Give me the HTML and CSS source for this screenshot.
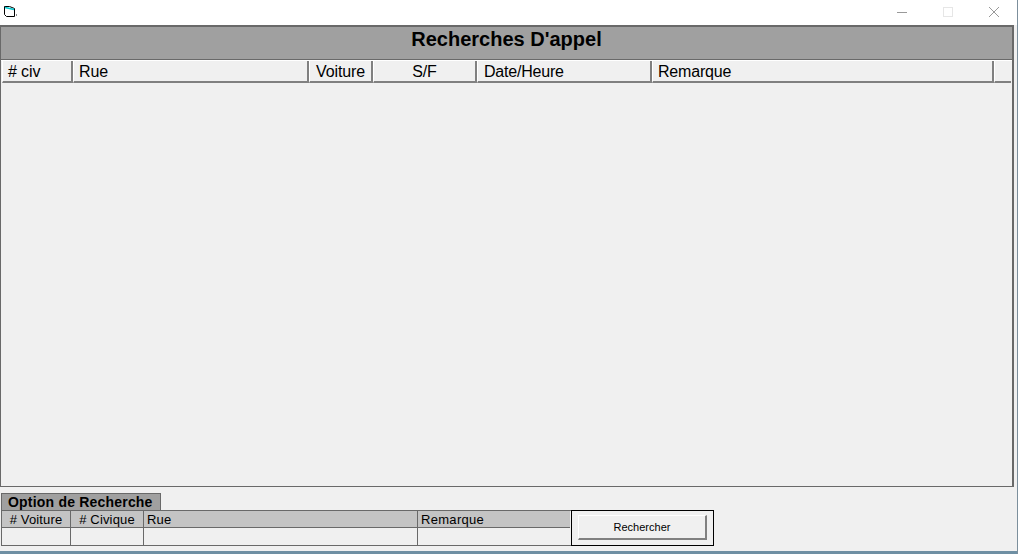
FILE: index.html
```html
<!DOCTYPE html>
<html lang="fr">
<head>
<meta charset="utf-8">
<title>Recherches D'appel</title>
<link rel="stylesheet" href="styles.css">
</head>
<body>
<div class="window">
  <div class="titlebar">
    <svg class="app-icon" width="14" height="14" viewBox="0 0 14 14">
      <path d="M1.5 2.5H6.5L11.5 4.5V12.5H3.5L1.5 10.5Z" fill="#fff" stroke="#000"/>
      <path d="M2 3.5L11 5.5" stroke="#00c8d0" stroke-width="1.5"/>
      <rect x="13" y="10" width="1" height="2" fill="#888"/>
    </svg>
    <div class="controls">
      <svg class="ctl ctl-min" width="14" height="14" viewBox="0 0 14 14"><path d="M2 7.5H12" stroke="#999"/></svg>
      <svg class="ctl ctl-max" width="14" height="14" viewBox="0 0 14 14"><rect x="2.5" y="2.5" width="9" height="9" fill="none" stroke="#e6e6e6"/></svg>
      <svg class="ctl ctl-close" width="14" height="14" viewBox="0 0 14 14"><path d="M2 2L12 12M12 2L2 12" stroke="#999"/></svg>
    </div>
  </div>
  <div class="content">
    <div class="results">
      <div class="results-title">Recherches D'appel</div>
      <div class="columns">
        <div class="col col-civ">#&nbsp;civ</div>
        <div class="col col-rue">Rue</div>
        <div class="col col-voiture">Voiture</div>
        <div class="col col-sf">S/F</div>
        <div class="col col-date">Date/Heure</div>
        <div class="col col-rem">Remarque</div>
        <div class="col col-end"></div>
      </div>
      <div class="list"></div>
    </div>
    <div class="options">
      <div class="options-tab">Option de Recherche</div>
      <div class="options-row">
        <div class="grid">
          <div class="cell head f-voiture">#&nbsp;Voiture</div>
          <div class="cell head f-civique">#&nbsp;Civique</div>
          <div class="cell head f-rue">Rue</div>
          <div class="cell head f-rem">Remarque</div>
          <div class="cell"></div>
          <div class="cell"></div>
          <div class="cell"></div>
          <div class="cell"></div>
        </div>
        <div class="action"><button class="search-btn" type="button">Rechercher</button></div>
      </div>
    </div>
  </div>
  <div class="desktop-edge"></div>
</div>
</body>
</html>
```

FILE: styles.css
```css
html, body { margin: 0; padding: 0; height: 100%; overflow: hidden; background: #f0f0f0; }
* { box-sizing: border-box; }

.window {
  width: 1018px;
  height: 554px;
  display: flex;
  flex-direction: column;
  border-right: 1px solid #7c8f9c;
  font-family: "Liberation Sans", Arial, sans-serif;
  color: #000;
}

.titlebar {
  height: 25px;
  flex: none;
  background: #fff;
  display: flex;
  align-items: center;
  justify-content: space-between;
  padding: 0 16px 0 3px;
}
.app-icon { display: block; margin-bottom: 3px; overflow: visible; }
.controls { display: flex; gap: 32px; margin-top: -1px; }
.ctl { display: block; }

.content {
  flex: 1;
  min-height: 0;
  display: flex;
  flex-direction: column;
  padding-right: 3px;
}

.results {
  height: 462px;
  flex: none;
  border: 1px solid #696969;
  border-top-width: 2px;
  border-right-width: 2px;
  display: flex;
  flex-direction: column;
}
.results-title {
  height: 33px;
  flex: none;
  background: #a0a0a0;
  border-bottom: 1px solid #696969;
  text-align: center;
  font-size: 20px;
  font-weight: 700;
  line-height: 25px;
}
.columns {
  height: 23px;
  flex: none;
  display: flex;
  background: #f0f0f0;
  border-top: 1px solid #fff;
  padding-left: 1px;
}
.col {
  background: #f0f0f0;
  border-left: 1px solid #fff;
  border-right: 2px solid #808080;
  border-bottom: 2px solid #808080;
  font-size: 16px;
  line-height: 22px;
  padding-left: 5px;
  white-space: nowrap;
  letter-spacing: -0.12px;
}
.col-civ { width: 71px; }
.col-rue { width: 236px; }
.col-voiture { width: 64px; padding-left: 6px; }
.col-sf { width: 104px; text-align: center; padding-left: 0; }
.col-date { width: 175px; padding-left: 6px; letter-spacing: -0.2px; }
.col-rem { width: 342px; padding-left: 5px; letter-spacing: -0.2px; }
.col-end { width: 17px; border-right: 0; }
.list { flex: 1; background: #f0f0f0; }

.options { margin-top: 6px; padding-left: 1px; }
.options-tab {
  width: 160px;
  height: 17px;
  background: #a0a0a0;
  border: 1px solid #696969;
  border-bottom: 0;
  font-size: 14px;
  font-weight: 700;
  line-height: 17px;
  padding-left: 6px;
  letter-spacing: 0.2px;
}
.options-row { display: flex; align-items: flex-start; }
.grid {
  width: 570px;
  display: grid;
  grid-template-columns: 69px 73px 274px 152px;
  grid-template-rows: 17px 17px;
  border: 1px solid #696969;
  border-right: 0;
}
.cell {
  border-right: 1px solid #696969;
  font-size: 13px;
  line-height: 17px;
}
.head {
  background: #c4c4c4;
  border-bottom: 1px solid #696969;
  padding-left: 3px;
  letter-spacing: 0.15px;
}
.f-voiture, .f-civique { text-align: center; padding-left: 0; }
.f-rem { border-right: 0; letter-spacing: 0.3px; }
.grid .cell:nth-child(8) { border-right: 0; }
.action {
  width: 143px;
  height: 36px;
  border: 1px solid #000;
  padding: 4px 6px 5px 6px;
  background: #f0f0f0;
}
.search-btn {
  display: block;
  width: 129px;
  height: 25px;
  margin: 0;
  padding: 0;
  background: #f0f0f0;
  border: 1px solid;
  border-top-color: #fff;
  border-left-color: #fff;
  border-right: 2px solid #808080;
  border-bottom: 2px solid #808080;
  font-family: "Liberation Sans", Arial, sans-serif;
  font-size: 11px;
  color: #000;
}
.desktop-edge { height: 3px; flex: none; background: #6f8fa3; }
```
